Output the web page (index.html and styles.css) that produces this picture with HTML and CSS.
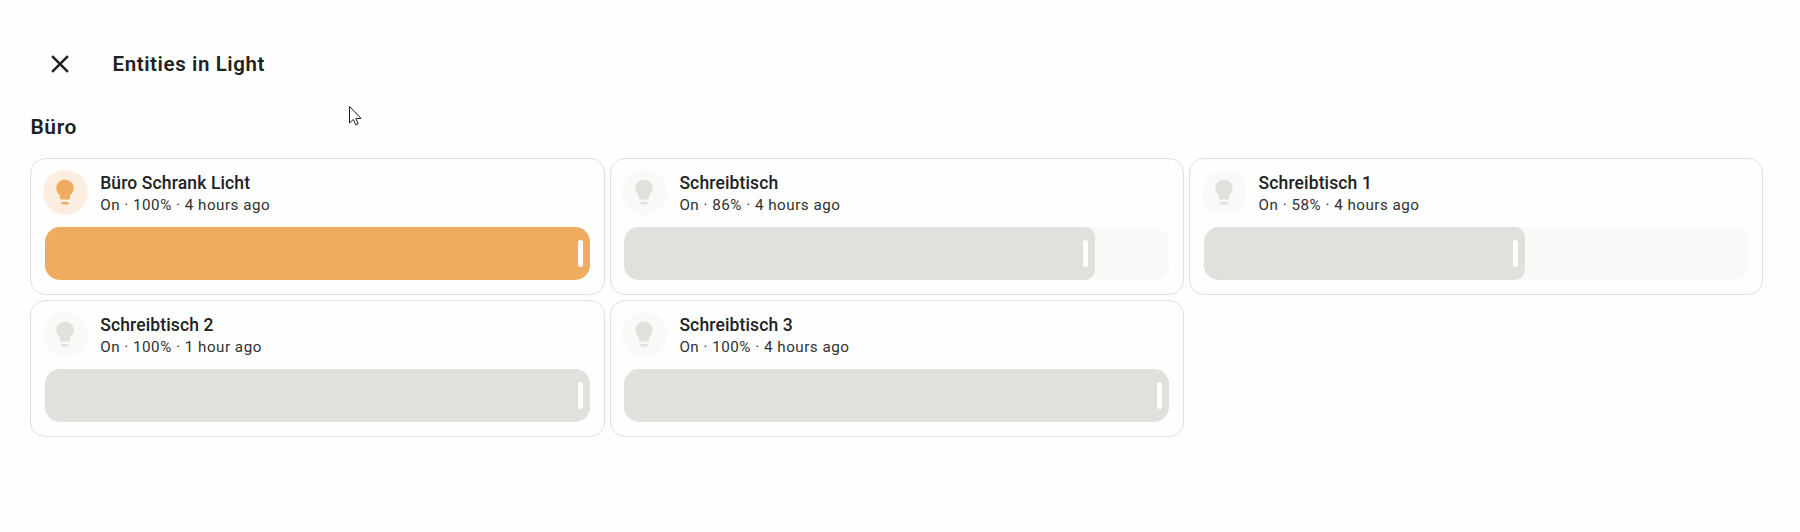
FILE: index.html
```html
<!DOCTYPE html>
<html lang="en">
<head>
<meta charset="utf-8">
<title>Entities in Light</title>
<link rel="stylesheet" href="styles.css">
</head>
<body>
<svg class="defs" aria-hidden="true">
  <symbol id="bulb" viewBox="0 0 24 24"><path d="M12,2A7,7 0 0,0 5,9C5,11.38 6.19,13.47 8,14.74V17A1,1 0 0,0 9,18H15A1,1 0 0,0 16,17V14.74C17.81,13.47 19,11.38 19,9A7,7 0 0,0 12,2M9,21A1,1 0 0,0 10,22H14A1,1 0 0,0 15,21V20H9V21Z"/></symbol>
</svg>
<header class="header">
  <svg class="close" viewBox="0 0 24 24"><path d="M19,6.41L17.59,5L12,10.59L6.41,5L5,6.41L10.59,12L5,17.59L6.41,19L12,13.41L17.59,19L19,17.59L13.41,12L19,6.41Z"/></svg>
  <h1 class="title">Entities in Light</h1>
</header>
<main class="content">
  <h2 class="area">Büro</h2>
  <div class="grid">
    <article class="card active">
      <div class="info"><span class="badge"><svg class="bulb"><use href="#bulb"/></svg></span><div class="text"><div class="name">Büro Schrank Licht</div><div class="state">On · 100% · 4 hours ago</div></div></div>
      <div class="slider"><div class="fill" style="width:100%"><span class="handle"></span></div></div>
    </article>
    <article class="card">
      <div class="info"><span class="badge"><svg class="bulb"><use href="#bulb"/></svg></span><div class="text"><div class="name">Schreibtisch</div><div class="state">On · 86% · 4 hours ago</div></div></div>
      <div class="slider"><div class="fill" style="width:86.4%"><span class="handle"></span></div></div>
    </article>
    <article class="card">
      <div class="info"><span class="badge"><svg class="bulb"><use href="#bulb"/></svg></span><div class="text"><div class="name">Schreibtisch 1</div><div class="state">On · 58% · 4 hours ago</div></div></div>
      <div class="slider"><div class="fill" style="width:59%"><span class="handle"></span></div></div>
    </article>
    <article class="card">
      <div class="info"><span class="badge"><svg class="bulb"><use href="#bulb"/></svg></span><div class="text"><div class="name">Schreibtisch 2</div><div class="state">On · 100% · 1 hour ago</div></div></div>
      <div class="slider"><div class="fill" style="width:100%"><span class="handle"></span></div></div>
    </article>
    <article class="card">
      <div class="info"><span class="badge"><svg class="bulb"><use href="#bulb"/></svg></span><div class="text"><div class="name">Schreibtisch 3</div><div class="state">On · 100% · 4 hours ago</div></div></div>
      <div class="slider"><div class="fill" style="width:100%"><span class="handle"></span></div></div>
    </article>
  </div>
</main>
<svg class="cursor" viewBox="0 0 13 20"><path d="M.5 .5V17L4.3 13.4L6.7 18.8L9.1 17.8L6.8 12.4H12Z"/></svg>
</body>
</html>
```
FILE: styles.css
```css
* { box-sizing: border-box; }
body {
  margin: 0;
  height: 532px;
  overflow: hidden;
  background: #fefefe;
  color: #212121;
  font-family: Roboto, "Noto Sans", sans-serif;
}
.defs { display: none; }
.header {
  display: flex;
  align-items: center;
  gap: 37.5px;
  padding: 34px 45px 0;
  height: 94px;
}
.close { width: 30px; height: 30px; fill: #212121; }
.title { margin: 0; font-size: 20.5px; font-weight: 600; letter-spacing: .6px; line-height: 30px; }
.content { padding: 18px 37px 0 30.4px; }
.area { margin: 0 0 16px; font-size: 21px; font-weight: 600; letter-spacing: .6px; line-height: 30px; }
.grid { display: grid; grid-template-columns: repeat(3, 1fr); gap: 5px; }
.card {
  --color: #e0e1dc;
  --tint: #f9f9f7;
  height: 137px;
  padding: 11px 14px 14px 11.8px;
  border: 1px solid #e0e0e0;
  border-radius: 15px;
}
.card.active { --color: #efab60; --tint: #fbeee0; }
.info { display: flex; gap: 12px; height: 45px; }
.badge {
  display: flex;
  align-items: center;
  justify-content: center;
  width: 45px;
  height: 45px;
  border-radius: 50%;
  background: var(--tint);
}
.bulb { width: 30px; height: 30px; margin: 0 1px 1px 0; fill: var(--color); }
.text { padding-top: 1px; }
.name { font-size: 17.5px; font-weight: 500; line-height: 25px; letter-spacing: .13px; }
.state { margin-top: -1px; font-size: 15.2px; line-height: 20px; letter-spacing: .5px; color: #303030; }
.slider {
  height: 53px;
  margin: 12px 0 0 2px;
  border-radius: 15px;
  background: var(--tint);
  overflow: hidden;
}
.fill {
  display: flex;
  align-items: center;
  justify-content: flex-end;
  height: 100%;
  padding-right: 7px;
  border-radius: 0 10px 10px 0;
  background: var(--color);
}
.handle { width: 5px; height: 27px; border-radius: 2.5px; background: #fff; }
.cursor {
  position: absolute;
  left: 349px;
  top: 106px;
  width: 13px;
  height: 20px;
  fill: #fff;
  stroke: #1c1c28;
  stroke-width: 1;
}
```
